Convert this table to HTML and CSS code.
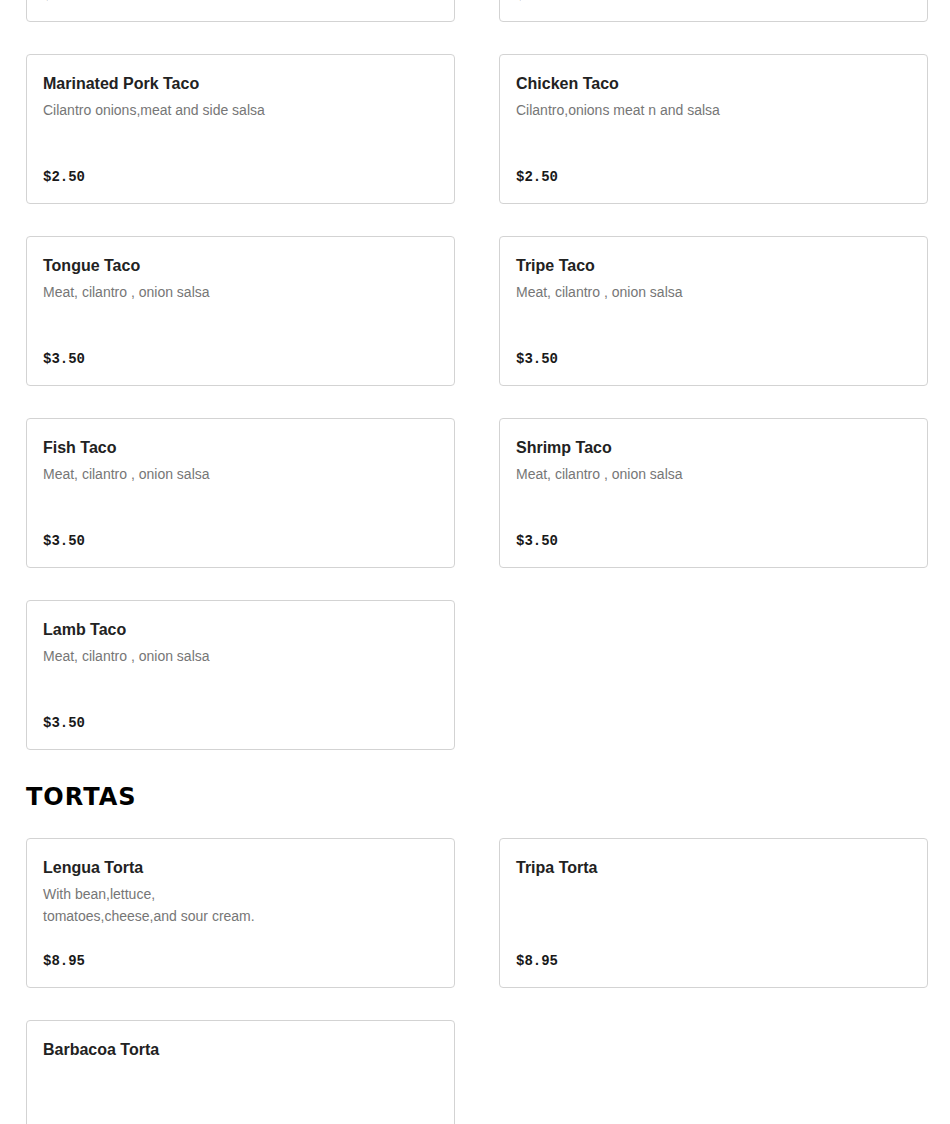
FILE: index.html
```html
<!DOCTYPE html>
<html>
<head>
  <title>Menu</title>
  <link rel="stylesheet" href="styles.css">
</head>
<body>
  <div class="menu">
    <!-- Tacos -->
    <section class="menu-section">
      <h2 class="section-title">TACOS</h2>
      <div class="item-grid">
        <div class="item-card">
          <h3 class="item-name">Asada Taco</h3>
          <p class="item-desc">Cilantro onions,meat and side salsa</p>
          <span class="item-price">$2.50</span>
        </div>
        <div class="item-card">
          <h3 class="item-name">Al Pastor Taco</h3>
          <p class="item-desc">Cilantro onions,meat and side salsa</p>
          <span class="item-price">$2.50</span>
        </div>

        <div class="item-card">
          <h3 class="item-name">Marinated Pork Taco</h3>
          <p class="item-desc">Cilantro onions,meat and side salsa</p>
          <span class="item-price">$2.50</span>
        </div>
        <div class="item-card">
          <h3 class="item-name">Chicken Taco</h3>
          <p class="item-desc">Cilantro,onions meat n and salsa</p>
          <span class="item-price">$2.50</span>
        </div>

        <div class="item-card">
          <h3 class="item-name">Tongue Taco</h3>
          <p class="item-desc">Meat, cilantro , onion salsa</p>
          <span class="item-price">$3.50</span>
        </div>
        <div class="item-card">
          <h3 class="item-name">Tripe Taco</h3>
          <p class="item-desc">Meat, cilantro , onion salsa</p>
          <span class="item-price">$3.50</span>
        </div>

        <div class="item-card">
          <h3 class="item-name">Fish Taco</h3>
          <p class="item-desc">Meat, cilantro , onion salsa</p>
          <span class="item-price">$3.50</span>
        </div>
        <div class="item-card">
          <h3 class="item-name">Shrimp Taco</h3>
          <p class="item-desc">Meat, cilantro , onion salsa</p>
          <span class="item-price">$3.50</span>
        </div>

        <div class="item-card">
          <h3 class="item-name">Lamb Taco</h3>
          <p class="item-desc">Meat, cilantro , onion salsa</p>
          <span class="item-price">$3.50</span>
        </div>
      </div>
    </section>

    <!-- Tortas -->
    <section class="menu-section">
      <h2 class="section-title">TORTAS</h2>
      <div class="item-grid">
        <div class="item-card">
          <h3 class="item-name">Lengua Torta</h3>
          <p class="item-desc">With bean,lettuce, tomatoes,cheese,and sour cream.</p>
          <span class="item-price">$8.95</span>
        </div>
        <div class="item-card">
          <h3 class="item-name">Tripa Torta</h3>
          <span class="item-price">$8.95</span>
        </div>

        <div class="item-card">
          <h3 class="item-name">Barbacoa Torta</h3>
          <span class="item-price">$8.95</span>
        </div>
      </div>
    </section>
  </div>
</body>
</html>
```

FILE: styles.css
```css
/* Reset */
*,
*::before,
*::after {
  box-sizing: border-box;
  margin: 0;
  padding: 0;
}

body {
  font-family: "Liberation Sans", Arial, sans-serif;
  background-color: #fff;
  color: #191919;
}

/* Page is shown scrolled down into the menu */
.menu {
  margin-top: -216px;
  padding: 0 22px 0 26px;
}

.menu-section {
  padding-top: 31px;
}

.section-title {
  font-family: "DejaVu Sans", sans-serif;
  font-size: 24px;
  font-weight: bold;
  line-height: 32px;
  letter-spacing: 1px;
  color: #000;
  margin-bottom: 25px;
}

.item-grid {
  display: grid;
  grid-template-columns: 1fr 1fr;
  column-gap: 44px;
  row-gap: 32px;
}

/* Item cards */
.item-card {
  display: flex;
  flex-direction: column;
  align-items: flex-start;
  height: 150px;
  padding: 17px 16px 16px;
  border: 1px solid #d3d3d3;
  border-radius: 4px;
  background-color: #fff;
}

.item-name {
  font-size: 16px;
  font-weight: bold;
  line-height: 24px;
  color: #222;
}

.item-desc {
  max-width: 240px;
  margin-top: 3px;
  font-size: 14px;
  line-height: 22px;
  color: #767676;
}

.item-price {
  margin-top: auto;
  font-family: "Liberation Mono", "Courier New", monospace;
  font-size: 14px;
  font-weight: bold;
  line-height: 20px;
  color: #191919;
}
```
